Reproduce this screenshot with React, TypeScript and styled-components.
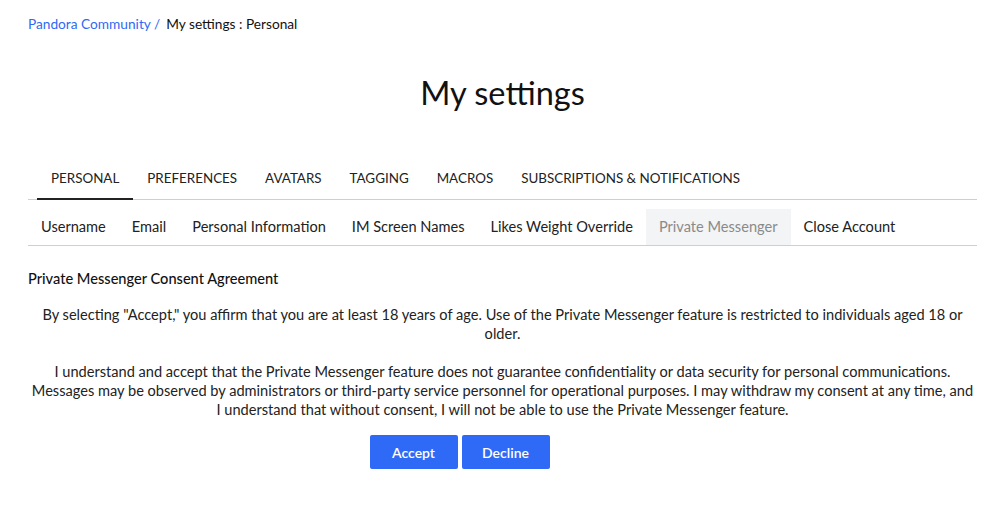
import styled, { createGlobalStyle } from "styled-components";

const GlobalStyle = createGlobalStyle`
  body {
    margin: 0;
    background: #ffffff;
    font-family: Lato, "Open Sans", sans-serif;
    color: #1a1a1a;
  }
`;

const Page = styled.div`
  padding: 14px 21px 0 28px;
`;

const Breadcrumb = styled.nav`
  display: flex;
  gap: 6px;
  font-size: 13.7px;
  line-height: 20px;
`;

const CrumbLink = styled.a`
  color: #2d6af5;
  text-decoration: none;
`;

const CrumbCurrent = styled.span`
  color: #111;
`;

const Title = styled.h1`
  margin: 39px 0 44px;
  text-align: center;
  font-size: 32.5px;
  font-weight: 400;
  line-height: 40px;
  color: #111;
`;

const TabList = styled.div`
  display: flex;
  padding-left: 9px;
  border-bottom: 1px solid #cfcfcf;
`;

const Tab = styled.div<{ $active?: boolean }>`
  padding: 11px 14px 10px;
  font-size: 13.4px;
  line-height: 20px;
  text-transform: uppercase;
  color: #222;
  margin-bottom: -1px;
  border-bottom: 2px solid ${(p) => (p.$active ? "#222" : "transparent")};
`;

const SubTabList = styled.div`
  display: flex;
  margin-top: 9px;
  border-bottom: 1px solid #cfcfcf;
`;

const SubTab = styled.div<{ $active?: boolean }>`
  padding: 8px 13px;
  font-size: 14.6px;
  line-height: 20px;
  color: ${(p) => (p.$active ? "#8a8a8a" : "#222")};
  background: ${(p) => (p.$active ? "#f3f4f5" : "transparent")};
`;

const Consent = styled.section`
  padding-top: 23px;
`;

const ConsentHeading = styled.h3`
  margin: 0 0 16px;
  font-size: 14.6px;
  font-weight: 500;
  line-height: 20px;
  color: #111;
`;

const ConsentText = styled.p`
  margin: 0 0 19px;
  text-align: center;
  font-size: 14.6px;
  line-height: 19px;
  color: #222;

  &:last-of-type {
    margin-bottom: 16px;
  }
`;

const Actions = styled.div`
  display: flex;
  justify-content: center;
  gap: 4px;
  padding-right: 86px;
`;

const Button = styled.button`
  width: 88px;
  height: 34px;
  border: none;
  border-radius: 2px;
  background: #2f6af7;
  color: #fff;
  font-family: inherit;
  font-size: 14px;
  font-weight: 600;
  cursor: pointer;
`;

const tabs = ["Personal", "Preferences", "Avatars", "Tagging", "Macros", "Subscriptions & Notifications"];
const subTabs = [
  "Username",
  "Email",
  "Personal Information",
  "IM Screen Names",
  "Likes Weight Override",
  "Private Messenger",
  "Close Account",
];

export default function App() {
  return (
    <>
      <GlobalStyle />
      <Page>
        <Breadcrumb>
          <CrumbLink href="#">Pandora Community /</CrumbLink>
          <CrumbCurrent>My settings : Personal</CrumbCurrent>
        </Breadcrumb>
        <Title>My settings</Title>
        <TabList>
          {tabs.map((t, i) => (
            <Tab key={t} $active={i === 0}>
              {t}
            </Tab>
          ))}
        </TabList>
        <SubTabList>
          {subTabs.map((t) => (
            <SubTab key={t} $active={t === "Private Messenger"}>
              {t}
            </SubTab>
          ))}
        </SubTabList>
        <Consent>
          <ConsentHeading>Private Messenger Consent Agreement</ConsentHeading>
          <ConsentText>
            By selecting "Accept," you affirm that you are at least 18 years of age. Use of the Private Messenger
            feature is restricted to individuals aged 18 or older.
          </ConsentText>
          <ConsentText>
            I understand and accept that the Private Messenger feature does not guarantee confidentiality or data
            security for personal communications. Messages may be observed by administrators or third-party service
            personnel for operational purposes. I may withdraw my consent at any time, and I understand that without
            consent, I will not be able to use the Private Messenger feature.
          </ConsentText>
          <Actions>
            <Button>Accept</Button>
            <Button>Decline</Button>
          </Actions>
        </Consent>
      </Page>
    </>
  );
}
